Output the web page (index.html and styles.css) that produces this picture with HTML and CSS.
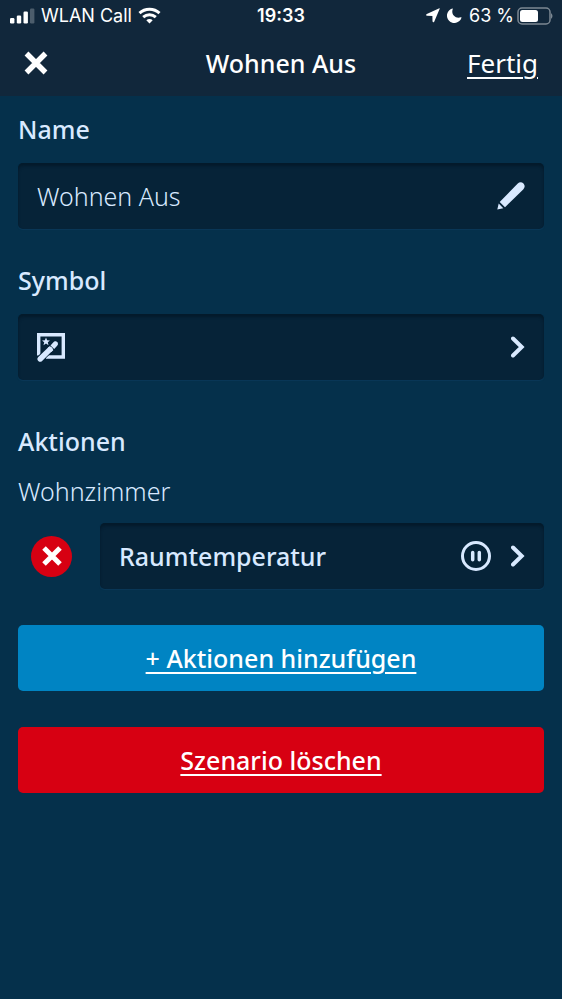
FILE: index.html
```html
<!DOCTYPE html>
<html lang="de">
<head>
<meta charset="utf-8">
<meta name="viewport" content="width=device-width, initial-scale=1">
<title>Wohnen Aus</title>
<link rel="stylesheet" href="styles.css">
</head>
<body>
<header class="header">
  <div class="status">
    <div class="status-side">
      <svg width="26" height="18" viewBox="0 0 26 18" fill="#fff" aria-hidden="true">
        <rect x="1" y="11" width="4.400" height="5.500" rx="1.200"/><rect x="7.800" y="8.500" width="4.400" height="8" rx="1.200"/><rect x="14.500" y="4.500" width="4.400" height="12" rx="1.200"/><rect x="21" y="1.500" width="4.400" height="15" rx="1.200" opacity=".25"/>
      </svg>
      <span>WLAN Call</span>
      <svg width="23" height="17" viewBox="0 0 22 17" fill="none" stroke="#fff" stroke-width="3" aria-hidden="true">
        <path d="M1 6.200C6.500.900 15.500.900 21 6.200M4.700 10.200C8.400 6.900 13.600 6.900 17.300 10.200"/><path d="M11 16.500 7.800 13.300C9.600 11.700 12.400 11.700 14.200 13.300Z" fill="#fff" stroke="none"/>
      </svg>
    </div>
    <time class="clock">19:33</time>
    <div class="status-side status-end">
      <svg width="14" height="15" viewBox="0 0 14 15" aria-hidden="true"><path d="M13.700.800 8.200 13.700Q7 15.200 6.500 13.300L6.400 7.900 1 7.800Q-.700 7.200.800 6.100L12.800.400Q14 0 13.700.800Z" fill="#fff"/></svg>
      <svg width="15" height="15" viewBox="0 0 15 15" aria-hidden="true"><path d="M5.300.500Q6 .300 5.700 1.200C3.800 6.500 8.500 11.200 13.800 9.300Q14.800 9 14.400 9.900A7.400 7.400 0 1 1 5.300.500Z" fill="#fff"/></svg>
      <span class="battery">63 %
        <svg width="36" height="18" viewBox="0 0 36 18" aria-hidden="true">
          <rect x="1" y="1" width="32" height="16" rx="4" fill="none" stroke="#7c8893" stroke-width="1.500"/><rect x="3" y="3" width="18" height="12" rx="2.500" fill="#fff"/><path d="M34 6Q37 9 34 12Z" fill="#7c8893"/>
        </svg>
      </span>
    </div>
  </div>
  <nav class="bar">
    <button class="close" type="button" aria-label="Schließen"><svg width="24" height="24" viewBox="0 0 24 24" stroke="#fff" stroke-width="5.400"><path d="M2.500 2.500 21.500 21.500M21.500 2.500 2.500 21.500"/></svg></button>
    <h1>Wohnen Aus</h1>
    <a class="done" href="#fertig">Fertig</a>
  </nav>
</header>
<main>
  <section>
    <label class="label" for="name">Name</label>
    <div class="field">
      <input id="name" type="text" value="Wohnen Aus">
      <svg width="28" height="28" viewBox="0 0 28 28" fill="#d8e9ff" aria-hidden="true"><path d="M2.700 20 20.500 1.800Q23.500-.900 26.500 1.500Q29 4.500 26.200 7.500L8 25.200ZM1.700 21.500 6.300 26.300.300 27.600Z"/></svg>
    </div>
  </section>
  <section>
    <h2 class="label">Symbol</h2>
    <button class="field" type="button" aria-label="Symbol auswählen">
      <svg width="28" height="30" viewBox="0 0 28 30" aria-hidden="true">
        <path d="M1.700 23.500V2.700H26.300V25H9" fill="none" stroke="#d8e9ff" stroke-width="3.400"/>
        <path d="M9 5.500 10.100 8.200 13 8.500 10.800 10.300 11.500 13.200 9 11.600 6.500 13.200 7.200 10.300 5 8.500 7.900 8.200Z" fill="#d8e9ff"/>
        <path d="M2 28 18.500 11.800" stroke="#062338" stroke-width="7.200" fill="none"/>
        <path d="M3.200 27 13 17.400" stroke="#d8e9ff" stroke-width="5.400" stroke-linecap="round"/>
        <path d="M10.600 16.200 14.400 20 16.400 18 12.600 14.200ZM13.500 13.400 16.200 10.500Q17.300 8.800 19 9.300 21.500 10.100 21 12.300 20.700 13.500 19.700 14.200L17.200 17Z" fill="#d8e9ff"/>
      </svg>
      <svg class="chevron" width="14" height="22" viewBox="0 0 14 22"><path d="M2 2.500 10.700 11 2 19.500"/></svg>
    </button>
  </section>
  <section class="actions">
    <h2 class="label">Aktionen</h2>
    <h3>Wohnzimmer</h3>
    <div class="row">
      <button class="remove" type="button" aria-label="Raumtemperatur entfernen"><svg width="20" height="20" viewBox="0 0 20 20" stroke="#fff" stroke-width="5"><path d="M2 2 18 18M18 2 2 18"/></svg></button>
      <button class="field" type="button">
        <span class="field-text">Raumtemperatur</span>
        <svg width="30" height="30" viewBox="0 0 30 30" fill="none" stroke="#d8e9ff" stroke-width="3" aria-hidden="true"><circle cx="15" cy="15" r="13.500"/><path d="M11.700 11.500V18.700M18.300 11.500V18.700" stroke-width="3.500" stroke-linecap="round"/></svg>
        <svg class="chevron" width="14" height="22" viewBox="0 0 14 22"><path d="M2 2.500 10.700 11 2 19.500"/></svg>
      </button>
    </div>
  </section>
  <button class="action add" type="button">+ Aktionen hinzufügen</button>
  <button class="action delete" type="button">Szenario löschen</button>
</main>
</body>
</html>
```
FILE: styles.css
```css
* { box-sizing: border-box; }

body {
  margin: 0;
  min-height: 100vh;
  background: #05304b;
  color: #d8e9ff;
  font: 500 25px/32px "Noto Sans", "Open Sans", sans-serif;
}

h1, h2, h3 { margin: 0; font: inherit; }
svg { display: block; flex: none; }
button, input { font: inherit; color: inherit; border: 0; padding: 0; margin: 0; background: none; }
button { cursor: pointer; }

.header { background: #11273b; color: #fff; height: 96px; }

.status {
  display: grid;
  grid-template-columns: 1fr auto 1fr;
  align-items: center;
  height: 31px;
  padding: 0 9px;
  font: 400 18px/30px Inter, sans-serif;
}
.status-side { display: flex; align-items: center; gap: 6px; }
.status-end { justify-content: flex-end; gap: 7px; }
.battery { display: flex; align-items: center; gap: 3px; }
.clock { font-weight: 600; }

.bar {
  display: grid;
  grid-template-columns: 1fr auto 1fr;
  align-items: center;
  height: 63px;
  padding: 0 24px;
}
.close { justify-self: start; }
.done {
  justify-self: end;
  color: #fff;
  font-size: 26px;
  font-weight: 400;
  text-decoration-thickness: 2px;
  text-underline-offset: 4px;
}

main { padding: 17px 18px; }
section { margin-bottom: 35px; }
.label { display: block; margin-bottom: 18px; }

.field {
  display: flex;
  align-items: center;
  gap: 20px;
  width: 100%;
  height: 66px;
  padding: 0 19px;
  border-radius: 5px;
  background: #062338;
  box-shadow: inset 0 3px 3px #041a2b, 0 1px 1px #0b3858;
  text-align: left;
}
.field input { flex: 1; min-width: 0; font-weight: 300; outline: 0; }
.field-text { flex: 1; }

.chevron {
  margin-left: auto;
  fill: none;
  stroke: #d8e9ff;
  stroke-width: 4;
  stroke-linecap: round;
}

.actions { padding-top: 10px; margin-bottom: 36px; }
.actions h3 { margin-bottom: 16px; font-weight: 300; }
.row { display: flex; align-items: center; gap: 28px; padding-left: 13px; }
.row .field { flex: 1; }
.remove {
  display: grid;
  place-items: center;
  flex: none;
  width: 41px;
  height: 41px;
  border-radius: 50%;
  background: #d70012;
}

.action {
  display: block;
  width: 100%;
  height: 66px;
  margin-bottom: 36px;
  border-radius: 5px;
  color: #fff;
  text-decoration: underline;
  text-decoration-thickness: 2px;
  text-underline-offset: 4px;
}
.add { background: #0084c3; }
.delete { background: #d70012; }
```
